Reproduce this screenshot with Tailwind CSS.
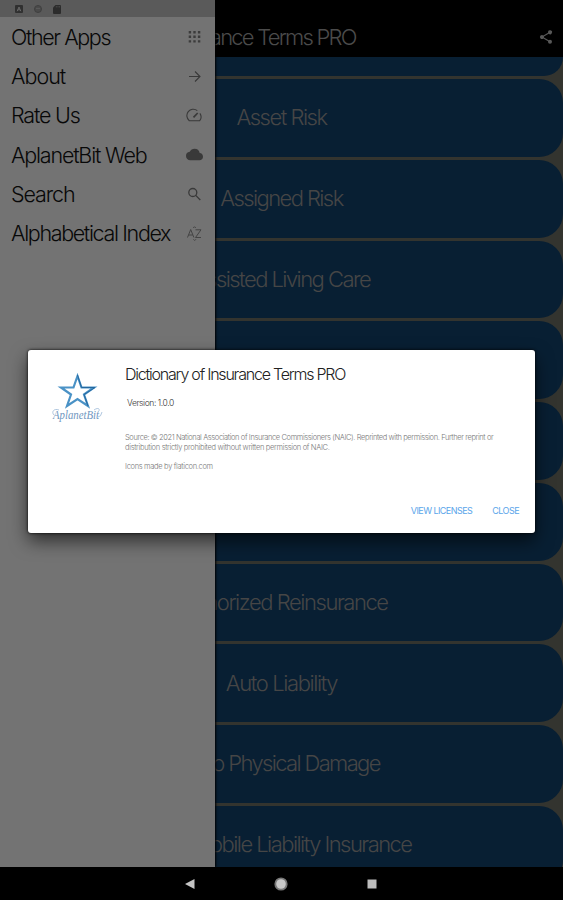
<!DOCTYPE html>
<html lang="en">
<head>
    <meta charset="UTF-8">
    <meta name="viewport" content="width=device-width, initial-scale=1.0">
    <title>Dictionary of Insurance Terms PRO</title>
    <script src="https://cdn.jsdelivr.net/npm/@tailwindcss/browser@4"></script>
</head>
<body class="bg-black">
<div class="relative flex flex-col w-[563px] h-[900px] overflow-hidden bg-black font-['Inter','Liberation_Sans',sans-serif] font-light">

    <!-- App bar -->
    <header class="flex items-center justify-between h-[57px] pt-[17px] pl-[56px] pr-[9px] text-[#4b4b4b]">
        <h1 class="text-[22px] font-light tracking-[-1.77px] whitespace-nowrap">Dictionary of Insurance Terms PRO</h1>
        <svg class="w-4 h-4" viewBox="0 0 24 24" fill="#585858">
            <path d="M18 16.1c-.8 0-1.400.3-2 .8l-7.100-4.200a3 3 0 0 0 0-1.400L16 7.200A3 3 0 1 0 15 5l.1.700L8 9.800a3 3 0 1 0 0 4.400l7.100 4.200-.1.600a3 3 0 1 0 3-2.900z"/>
        </svg>
    </header>

    <!-- Terms list -->
    <main class="flex flex-col gap-[3px] h-[810px] overflow-hidden bg-[#33342f] text-[22px] text-[#464646] text-center whitespace-nowrap">
        <div class="shrink-0 h-[19px] rounded-b-[22px] bg-[#081f33]"></div>
        <div class="flex shrink-0 items-center justify-center h-[77.75px] rounded-[24px] bg-[#081f33] tracking-[-1.5px]">Asset Risk</div>
        <div class="flex shrink-0 items-center justify-center h-[77.75px] rounded-[24px] bg-[#081f33] tracking-[-1.6px]">Assigned Risk</div>
        <div class="flex shrink-0 items-center justify-center h-[77.75px] rounded-[24px] bg-[#081f33] tracking-[-1.55px]">Assisted Living Care</div>
        <div class="shrink-0 h-[77.75px] rounded-[24px] bg-[#081f33]"></div>
        <div class="shrink-0 h-[77.75px] rounded-[24px] bg-[#081f33]"></div>
        <div class="shrink-0 h-[77.75px] rounded-[24px] bg-[#081f33]"></div>
        <div class="flex shrink-0 items-center justify-center h-[77.75px] rounded-[24px] bg-[#081f33] tracking-[-1.45px]">Authorized Reinsurance</div>
        <div class="flex shrink-0 items-center justify-center h-[77.75px] rounded-[24px] bg-[#081f33] tracking-[-1.4px]">Auto Liability</div>
        <div class="flex shrink-0 items-center justify-center h-[77.75px] rounded-[24px] bg-[#081f33] tracking-[-1.65px]">Auto Physical Damage</div>
        <div class="flex shrink-0 items-center justify-center h-[77.75px] rounded-[24px] bg-[#081f33] tracking-[-1.55px]">Automobile Liability Insurance</div>
    </main>

    <!-- System navigation -->
    <footer class="flex items-center justify-center gap-[78px] h-[33px] pr-px bg-black">
        <svg class="w-3 h-3" viewBox="0 0 12 12" fill="#c4c4c4"><path d="M10.500 1v10L1 6z"/></svg>
        <svg class="w-[14px] h-[14px]" viewBox="0 0 14 14"><circle cx="7" cy="7" r="6.600" fill="#777"/><circle cx="7" cy="7" r="4.800" fill="#c8c8c8"/></svg>
        <svg class="w-3 h-3" viewBox="0 0 12 12" fill="#bdbdbd"><path d="M1.500 1.500h9v9h-9z"/></svg>
    </footer>

    <!-- Drawer -->
    <aside class="absolute left-0 top-0 flex flex-col w-[215px] h-[867px] bg-[#737373] shadow-[1px_0_2px_#000]">
        <div class="flex items-center gap-[11px] h-[17px] pl-[15px] pt-px bg-[#5a5a5a]">
            <svg class="w-[8px] h-[8px]" viewBox="0 0 8 8"><rect width="8" height="8" rx="1" fill="#303030"/><path d="M2.200 6.200 4 2l1.800 4.200M2.800 4.800h2.400" fill="none" stroke="#696969"/></svg>
            <svg class="w-[8px] h-[8px]" viewBox="0 0 8 8"><circle cx="4" cy="4" r="3.500" fill="#4b4b4b" stroke="#404040"/><path d="M2 3.500h4" stroke="#595959"/></svg>
            <svg class="w-[8px] h-[9px]" viewBox="0 0 8 9"><path d="M2.500 0H7q1 0 1 1v7q0 1-1 1H1Q0 9 0 8V2.500z" fill="#2c2c2c"/><path d="M3.300 1v1.500M5 1v1.500M6.600 1v1.500" stroke="#5a5a5a" stroke-width=".6"/></svg>
        </div>
        <nav class="flex flex-col text-[21.5px] text-[#080808] whitespace-nowrap">
            <div class="flex items-center justify-between h-[39.35px] pl-[11px] pr-[12px]">
                <span class="tracking-[-1.4px]">Other Apps</span>
                <svg class="w-[17px] h-[17px]" viewBox="0 0 17 17" fill="#3c3c3c">
                    <path d="M2.700 3h2.400v2.400H2.700zM7.300 3h2.400v2.400H7.300zM11.900 3h2.400v2.400h-2.400zM2.700 7.600h2.400V10H2.700zM7.300 7.600h2.400V10H7.300zM11.900 7.600h2.400V10h-2.400zM2.700 12.200h2.400v2.400H2.700zM7.300 12.200h2.400v2.400H7.300zM11.900 12.200h2.400v2.400h-2.400z"/>
                </svg>
            </div>
            <div class="flex items-center justify-between h-[39.35px] pl-[11px] pr-[12px]">
                <span class="tracking-[-1px]">About</span>
                <svg class="w-[17px] h-[17px]" viewBox="0 0 17 17" fill="none" stroke="#393939" stroke-width="1.100"><path d="M3 8.500h11M9 3.500l5 5-5 5"/></svg>
            </div>
            <div class="flex items-center justify-between h-[39.35px] pl-[11px] pr-[12px]">
                <span class="tracking-[-1.2px]">Rate Us</span>
                <svg class="w-[17px] h-[17px]" viewBox="0 0 17 17" fill="none" stroke="#393939" stroke-width="1.100"><path d="M11.300 3.600A6.300 6.300 0 0 0 3.300 13.700H13.700A6.200 6.200 0 0 0 13.900 6.400"/><path d="M7.500 10.300 11.700 6" stroke-width="1.700"/></svg>
            </div>
            <div class="flex items-center justify-between h-[39.35px] pl-[11px] pr-[12px]">
                <span class="tracking-[-1.2px]">AplanetBit Web</span>
                <svg class="w-[17px] h-[17px]" viewBox="0 0 24 24" fill="#393939"><path d="M19.350 10.040A7.490 7.490 0 0 0 12 4C9.110 4 6.600 5.640 5.350 8.040A5.994 5.994 0 0 0 0 14c0 3.310 2.690 6 6 6h13c2.760 0 5-2.240 5-5 0-2.640-2.050-4.780-4.650-4.960z"/></svg>
            </div>
            <div class="flex items-center justify-between h-[39.35px] pl-[11px] pr-[12px]">
                <span class="tracking-[-1.1px]">Search</span>
                <svg class="w-[17px] h-[17px]" viewBox="0 0 17 17" fill="none" stroke="#393939" stroke-width="1.300"><circle cx="6.800" cy="6.500" r="4"/><path d="m9.700 9.400 4.600 4.600"/></svg>
            </div>
            <div class="flex items-center justify-between h-[39.35px] pl-[11px] pr-[12px]">
                <span class="tracking-[-1.35px]">Alphabetical Index</span>
                <svg class="w-[17px] h-[17px]" viewBox="0 0 17 17" fill="none" stroke="#444" stroke-width="1"><path d="M1.500 12.500 4.700 4.500l3.200 8M2.700 10h4M9.500 4.800h5.500l-5.500 7.700H15M7.200 3l1.300-1.300L9.800 3M7.500 14.300l1.200 1.200 1.200-1.200"/></svg>
            </div>
        </nav>
    </aside>

    <!-- About dialog -->
    <section class="absolute left-[28px] top-[350px] flex w-[507px] h-[183px] rounded-[3px] bg-white shadow-[0_8px_18px_rgba(0,0,0,0.6),0_0_3px_#000]">
        <div class="w-[97px] pt-[22px] pl-[22px]">
            <svg class="w-[56px] h-[54px] overflow-visible" viewBox="0 0 56 54">
                <path d="M27.500 4 31.500 15.500H44L34 22.500 38 34 27.500 27 17 34 21 22.500 11 15.500H23.500z" fill="none" stroke="#4a92c6" stroke-width="2.200"/>
                <path d="M27.500 3 31.500 15.500H45L34 22.500 38 34" fill="none" stroke="#2468a0" stroke-width="1"/>
                <text x="3" y="47" textLength="46" lengthAdjust="spacingAndGlyphs" font-family="Liberation Serif" font-style="italic" font-size="12" fill="#6f96c0">AplanetBit</text>
                <path d="M9 38C4 36 1 40 4 43M44 38c4-3 7-1 4 2M48 45q3 0 4-5" fill="none" stroke="#9bb8d6" stroke-width=".8"/>
            </svg>
        </div>
        <div class="flex flex-col w-[395px] whitespace-nowrap">
            <h2 class="mt-[12px] text-[16px] leading-6 font-light tracking-[-1.22px] text-[#222]">Dictionary of Insurance Terms PRO</h2>
            <p class="mt-[11px] ml-[2px] text-[8.5px] leading-3 tracking-[-0.4px] text-[#333]">Version: 1.0.0</p>
            <p class="mt-[23.5px] text-[7.5px] leading-[10px] tracking-[-0.385px] text-[#777]">Source: © 2021 National Association of Insurance Commissioners (NAIC). Reprinted with permission. Further reprint or<br><span class="tracking-[-0.32px]">distribution strictly prohibited without written permission of NAIC.</span></p>
            <p class="mt-[9.5px] text-[7.5px] leading-[10px] tracking-[-0.32px] text-[#777]">Icons made by flaticon.com</p>
            <div class="flex justify-end gap-[20px] mt-[33px] pr-px text-[9px] leading-3 font-normal tracking-[-0.55px] text-[#5aa5ea]">
                <button>VIEW LICENSES</button>
                <button>CLOSE</button>
            </div>
        </div>
    </section>
</div>
</body>
</html>
